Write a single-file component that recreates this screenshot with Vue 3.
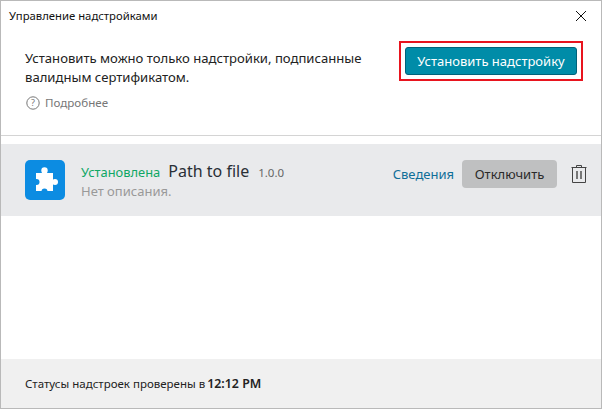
<template>
  <div class="window">
    <header class="titlebar">
      <span class="title">Управление надстройками</span>
      <svg class="close" width="12" height="12" viewBox="0 0 12 12"><path d="M1 1l10 10M11 1L1 11" stroke="#111" stroke-width="1" fill="none"/></svg>
    </header>
    <section class="intro">
      <div class="intro-text">
        <p class="desc">Установить можно только надстройки, подписанные<br>валидным сертификатом.</p>
        <div class="more">
          <svg width="14" height="14" viewBox="0 0 14 14"><circle cx="7" cy="7" r="6.2" fill="none" stroke="#777" stroke-width="1"/><text x="7" y="10.2" text-anchor="middle" font-size="9" fill="#777" font-family="Noto Sans">?</text></svg>
          <span>Подробнее</span>
        </div>
      </div>
      <div class="highlight"><button class="install">Установить надстройку</button></div>
    </section>
    <section class="row">
      <div class="icon">
        <svg width="40" height="40" viewBox="0 0 40 40">
          <g fill="#fff">
            <rect x="11" y="13" width="17" height="18"/>
            <circle cx="19.500" cy="10.500" r="3.200"/>
            <circle cx="30" cy="22" r="3"/>
          </g>
          <g fill="#0c8ce2">
            <circle cx="11.500" cy="22" r="3"/>
            <circle cx="19.500" cy="31.500" r="3"/>
          </g>
        </svg>
      </div>
      <div class="info">
        <div class="line1"><span class="status">Установлена</span><span class="name">Path to file</span><span class="ver">1.0.0</span></div>
        <div class="line2">Нет описания.</div>
      </div>
      <a class="details">Сведения</a>
      <button class="disable">Отключить</button>
      <svg class="trash" width="16" height="20" viewBox="0 0 16 20"><g fill="none" stroke="#444" stroke-width="1"><path d="M.5 3.500h15M5.500 3.500V1.500h5v2M1.500 3.500V18.500h13V3.500"/><path d="M6 7v8M10 7v8" stroke="#777" stroke-width="2"/></g></svg>
    </section>
    <div class="spacer"></div>
    <footer class="footer">Статусы надстроек проверены в <b>12:12 PM</b></footer>
  </div>
</template>

<script setup>
</script>

<style>
html, body { margin: 0; background: #fff; }
</style>

<style scoped>
.window {
  width: 602px; height: 409px; box-sizing: border-box;
  border: 1px solid #b9b9b9;
  display: flex; flex-direction: column;
  font-family: "Noto Sans", "Open Sans", sans-serif;
  background: #fff; color: #222;
}
.titlebar {
  height: 30px; box-sizing: border-box; display: flex; align-items: center; justify-content: space-between;
  padding: 0 14px 2px 8px; flex: none;
}
.title { font-size: 11.3px; color: #111; }
.close { position: relative; top: 1px; }
.intro {
  height: 105px; box-sizing: border-box; flex: none;
  display: flex; justify-content: space-between;
  border-bottom: 1px solid #d4d4d4;
  padding: 15px 18px 0 24px;
}
.desc { margin: 0; font-size: 13.1px; line-height: 19px; color: #222; padding-top: 3px; }
.more { display: flex; align-items: center; gap: 5px; margin-top: 8px; font-size: 11.600px; color: #777; }
.more svg { margin-left: 1px; }
.highlight {
  width: 184px; height: 40px; box-sizing: border-box; flex: none;
  border: 2px solid #e8141e; padding: 4px;
  margin-top: -5px;
}
.install {
  width: 100%; height: 100%; display: block; box-sizing: border-box; padding: 0;
  border: 1px solid #00627a; border-radius: 3px; background: #008ca8; color: #fff;
  font: 13px "Noto Sans", sans-serif;
}
.row {
  margin-top: 8px; height: 72px; flex: none; background: #e9eaec;
  display: flex; align-items: center; padding: 0 14px 12px 24px; box-sizing: border-box;
}
.icon {
  width: 40px; height: 40px; background: #0c8ce2; border-radius: 5px; flex: none;
  margin-top: 12px;
}
.icon svg { display: block; }
.info { margin-left: 16px; flex: 1; margin-top: 12px; }
.line1 { display: flex; align-items: baseline; line-height: 20px; }
.status { font-size: 12.900px; color: #0fa765; }
.name { font-size: 16px; color: #2a2f36; margin-left: 8px; }
.ver { font-size: 11.500px; color: #666; margin-left: 9px; }
.line2 { font-size: 13px; color: #999; line-height: 16px; }
.details { font-size: 13px; color: #106e98; margin-right: 8px; }
.disable {
  width: 95px; height: 28px; border: 0; border-radius: 4px; background: #bfc0c1; color: #2a2a2a;
  font: 13px "Noto Sans", sans-serif; padding: 0;
}
.trash { margin-left: 14px; }
.spacer { flex: 1; }
.footer {
  height: 49px; flex: none; background: #f0f0f0; display: flex; align-items: center; gap: 2px;
  padding-left: 24px; font-size: 11.500px; color: #222;
}
.footer b { font-weight: 600; font-size: 12.400px; }
</style>
